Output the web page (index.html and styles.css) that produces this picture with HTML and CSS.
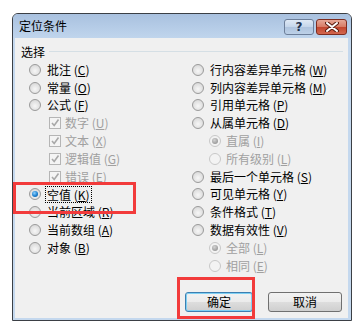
FILE: index.html
```html
<!DOCTYPE html>
<html lang="zh-CN">
<head>
    <meta charset="UTF-8">
    <title>定位条件</title>
    <link rel="stylesheet" href="styles.css">
</head>
<body>
    <div class="window">
        <div class="titlebar">
            <span class="title">定位条件</span>
            <div class="caption-buttons">
                <div class="cap help">?</div>
                <div class="cap close">
                    <svg width="14" height="10" viewBox="0 0 14 10">
                        <path d="M2 1 L12 9 M12 1 L2 9" stroke="#5a1e12" stroke-width="4" stroke-linecap="round"/>
                        <path d="M2 1 L12 9 M12 1 L2 9" stroke="#ffffff" stroke-width="2" stroke-linecap="round"/>
                    </svg>
                </div>
            </div>
        </div>

        <div class="client">
            <div class="group-head">
                <span>选择</span>
                <i class="rule"></i>
            </div>

            <div class="options">
                <!-- left column -->
                <div class="col">
                    <div class="opt"><span class="radio"></span>批注 (<u>C</u>)</div>
                    <div class="opt"><span class="radio"></span>常量 (<u>O</u>)</div>
                    <div class="opt"><span class="radio"></span>公式 (<u>F</u>)</div>
                    <div class="opt sub-check disabled"><span class="check"><svg width="10" height="10" viewBox="0 0 10 10"><path d="M2 5 L4.2 7.5 L8.5 1.5" fill="none" stroke="#a8a8a8" stroke-width="1.6"/></svg></span>数字 (<u>U</u>)</div>
                    <div class="opt sub-check disabled"><span class="check"><svg width="10" height="10" viewBox="0 0 10 10"><path d="M2 5 L4.2 7.5 L8.5 1.5" fill="none" stroke="#a8a8a8" stroke-width="1.6"/></svg></span>文本 (<u>X</u>)</div>
                    <div class="opt sub-check disabled"><span class="check"><svg width="10" height="10" viewBox="0 0 10 10"><path d="M2 5 L4.2 7.5 L8.5 1.5" fill="none" stroke="#a8a8a8" stroke-width="1.6"/></svg></span>逻辑值 (<u>G</u>)</div>
                    <div class="opt sub-check disabled"><span class="check"><svg width="10" height="10" viewBox="0 0 10 10"><path d="M2 5 L4.2 7.5 L8.5 1.5" fill="none" stroke="#a8a8a8" stroke-width="1.6"/></svg></span>错误 (<u>E</u>)</div>
                    <div class="opt"><span class="radio on"></span><span class="focus">空值 (<u>K</u>)</span></div>
                    <div class="opt"><span class="radio"></span>当前区域 (<u>R</u>)</div>
                    <div class="opt"><span class="radio"></span>当前数组 (<u>A</u>)</div>
                    <div class="opt"><span class="radio"></span>对象 (<u>B</u>)</div>
                </div>

                <!-- right column -->
                <div class="col">
                    <div class="opt"><span class="radio"></span>行内容差异单元格 (<u>W</u>)</div>
                    <div class="opt"><span class="radio"></span>列内容差异单元格 (<u>M</u>)</div>
                    <div class="opt"><span class="radio"></span>引用单元格 (<u>P</u>)</div>
                    <div class="opt"><span class="radio"></span>从属单元格 (<u>D</u>)</div>
                    <div class="opt sub-radio disabled"><span class="radio dim-on"></span>直属 (<u>I</u>)</div>
                    <div class="opt sub-radio disabled"><span class="radio"></span>所有级别 (<u>L</u>)</div>
                    <div class="opt"><span class="radio"></span>最后一个单元格 (<u>S</u>)</div>
                    <div class="opt"><span class="radio"></span>可见单元格 (<u>Y</u>)</div>
                    <div class="opt"><span class="radio"></span>条件格式 (<u>T</u>)</div>
                    <div class="opt"><span class="radio"></span>数据有效性 (<u>V</u>)</div>
                    <div class="opt sub-radio disabled"><span class="radio dim-on"></span>全部 (<u>L</u>)</div>
                    <div class="opt sub-radio disabled"><span class="radio"></span>相同 (<u>E</u>)</div>
                </div>
            </div>

            <div class="actions">
                <button class="btn btn-ok">确定</button>
                <button class="btn btn-cancel">取消</button>
            </div>
        </div>
    </div>

    <!-- red highlight boxes drawn over the dialog -->
    <div class="mark mark-blank"></div>
    <div class="mark mark-ok"></div>
</body>
</html>
```

FILE: styles.css
```css
body {
    margin: 0;
    background: #ffffff;
    font-family: "Noto Sans CJK SC", "DejaVu Sans", sans-serif;
    font-size: 12px;
    color: #000000;
    position: relative;
    width: 362px;
    height: 331px;
    overflow: hidden;
}

/* dialog frame */
.window {
    margin: 13px 0 0 12px;
    width: 340px;
    height: 308px;
    box-sizing: border-box;
    border: 1px solid #3b3f45;
    border-radius: 6px 6px 0 0;
    background: #c4d8ee;
    display: flex;
    flex-direction: column;
}
.titlebar {
    height: 24px;
    display: flex;
    align-items: center;
    justify-content: space-between;
    padding: 0 4px 0 6px;
    border-radius: 5px 5px 0 0;
    background: linear-gradient(to bottom, #a9c1df 0%, #b4cbe6 50%, #c0d5ec 100%);
}
.title {
    font-size: 12px;
    color: #000000;
    line-height: 14px;
}
.caption-buttons {
    display: flex;
    gap: 2px;
    margin-top: 1px;
}
.cap {
    height: 14px;
    border-radius: 3px;
    display: flex;
    align-items: center;
    justify-content: center;
}
.help {
    width: 28px;
    border: 1px solid #6d7f9a;
    background: linear-gradient(to bottom, #dfe9f5 0%, #c4d5ea 50%, #aec3de 51%, #bdd1e8 100%);
    font-family: "DejaVu Sans", sans-serif;
    font-weight: bold;
    font-size: 12px;
    color: #23334f;
    line-height: 14px;
}
.close {
    width: 29px;
    border: 1px solid #7e2c1f;
    background: linear-gradient(to bottom, #e6a796 0%, #d77a64 50%, #c2452d 51%, #d2674f 100%);
}

/* client area */
.client {
    flex: 1;
    margin: 0 3px 2px 2px;
    background: #f0f0f0;
    display: flex;
    flex-direction: column;
}
.group-head {
    display: flex;
    align-items: center;
    height: 16px;
    margin-top: 6px;
    padding: 0 5px 0 6px;
}
.group-head span {
    line-height: 16px;
}
.rule {
    flex: 1;
    height: 1px;
    margin-left: 4px;
    margin-top: -1px;
    background: #d5dfe5;
}

.options {
    display: grid;
    grid-template-columns: 163px 1fr;
    margin-top: 1px;
    padding-left: 14px;
}
.opt {
    height: 17.8px;
    display: flex;
    align-items: center;
    white-space: nowrap;
    line-height: 14px;
}
.opt u {
    text-decoration: underline;
    text-underline-offset: 1px;
}
.disabled {
    color: #a0a0a0;
}

/* radio buttons */
.radio {
    width: 10px;
    height: 10px;
    border-radius: 50%;
    border: 1px solid #9a9a9a;
    background: radial-gradient(circle at 50% 60%, #f7f7f7 0%, #e2e2e2 55%, #cfcfcf 100%);
    margin-right: 6px;
    flex: none;
    position: relative;
}
.radio.on::after,
.radio.dim-on::after {
    content: "";
    position: absolute;
    left: 2px;
    top: 2px;
    width: 6px;
    height: 6px;
    border-radius: 50%;
}
.radio.on::after {
    background: radial-gradient(circle at 40% 35%, #8fd3ff 0%, #1b7fcf 55%, #0c4f8f 100%);
}
.disabled .radio {
    border-color: #c8c8c8;
    background: #f3f3f3;
}
.radio.dim-on::after {
    background: radial-gradient(circle at 40% 35%, #d4d4d4 0%, #9c9c9c 70%);
}
.sub-radio {
    padding-left: 17px;
}
.sub-radio .radio {
    margin-right: 5px;
}

/* disabled check boxes */
.sub-check {
    padding-left: 20px;
}
.check {
    width: 10px;
    height: 10px;
    border: 1px solid #b5b5b5;
    background: #f4f4f4;
    margin-right: 4px;
    flex: none;
    display: flex;
    align-items: center;
    justify-content: center;
}

.focus {
    outline: 1px dotted #000000;
    outline-offset: 1px;
    line-height: 13px;
}

/* dialog buttons */
.actions {
    display: flex;
    justify-content: flex-end;
    gap: 15px;
    margin-top: 17px;
    padding-right: 6px;
}
.btn {
    height: 20px;
    padding: 0;
    font-family: "Noto Sans CJK SC", sans-serif;
    font-size: 12px;
    line-height: 16px;
    color: #000000;
    border: 1px solid #707070;
    border-radius: 3px;
    background: linear-gradient(to bottom, #f2f2f2 0%, #ebebeb 50%, #dddddd 51%, #cfcfcf 100%);
}
.btn-ok {
    width: 68px;
    border-color: #3c7fb1;
    box-shadow: inset 0 0 0 1px #7fd0f3;
}
.btn-cancel {
    width: 74px;
}

/* red annotation boxes */
.mark {
    position: absolute;
    border: 3px solid #f23b3b;
    box-sizing: border-box;
}
.mark-blank {
    left: 13px;
    top: 182px;
    width: 123px;
    height: 32px;
}
.mark-ok {
    left: 177px;
    top: 277px;
    width: 78px;
    height: 42px;
}
```
